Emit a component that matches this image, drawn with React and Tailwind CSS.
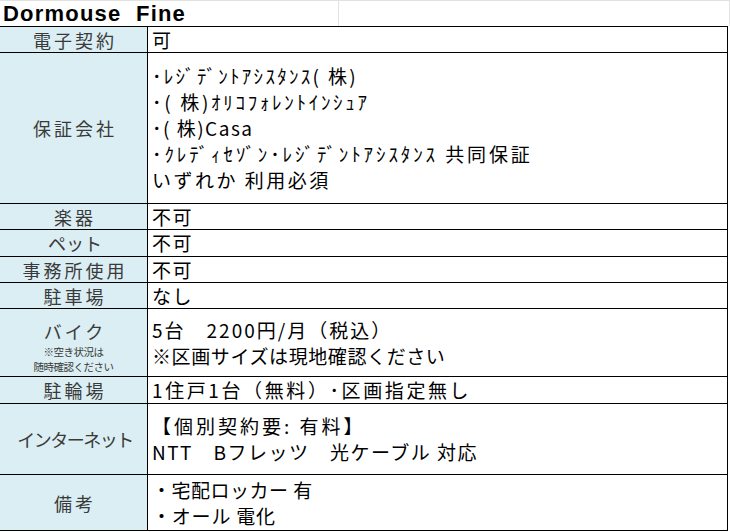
import React from 'react';

// 物件の設備・条件シート
const T = 'tracking-[1.5px]';
const W = 'tracking-[2.6px]';

const rows = [
  { label: '電子契約', h: 'h-[26px]', lines: [['可', T]] },
  {
    label: '保証会社',
    h: 'h-[151px]',
    lines: [
      ['･ﾚｼﾞﾃﾞﾝﾄｱｼｽﾀﾝｽ( 株)', 'tracking-[2.3px]'],
      ['･( 株)ｵﾘｺﾌｫﾚﾝﾄｲﾝｼｭｱ', 'tracking-[2.7px]'],
      ['･( 株)Casa', T],
      ['･ｸﾚﾃﾞｨｾｿﾞﾝ･ﾚｼﾞﾃﾞﾝﾄｱｼｽﾀﾝｽ 共同保証', 'tracking-[2.9px]'],
      ['いずれか 利用必須', 'tracking-[2.5px]'],
    ],
  },
  { label: '楽器', h: 'h-[26px]', lines: [['不可', T]] },
  { label: 'ペット', lt: 'tracking-[0px]', h: 'h-[27px]', lines: [['不可', T]] },
  { label: '事務所使用', h: 'h-[26px]', lines: [['不可', T]] },
  { label: '駐車場', h: 'h-[26px]', lines: [['なし', T]] },
  {
    label: 'バイク',
    note: ['※空き状況は', '随時確認ください'],
    h: 'h-[68px]',
    lines: [
      ['5台　2200円/月（税込）', 'tracking-[2px]'],
      ['※区画サイズは現地確認ください', 'tracking-[0.6px]'],
    ],
  },
  { label: '駐輪場', h: 'h-[27px]', lines: [['1住戸1台（無料）･区画指定無し', W]] },
  {
    label: 'インターネット',
    lt: 'tracking-[-1.5px]',
    h: 'h-[71px]',
    lines: [
      ['【個別契約要: 有料】', 'tracking-[3px]'],
      ['NTT　Bフレッツ　光ケーブル 対応', T],
    ],
  },
  {
    label: '備考',
    h: 'h-[56px]',
    lines: [
      ['・宅配ロッカー 有', 'tracking-[0.5px]'],
      ['・オール 電化', 'tracking-[0.8px]'],
    ],
  },
];

const jp = { fontFamily: '"Noto Sans CJK JP", "Noto Sans", sans-serif' };

export default function App() {
  return (
    <div className="w-[730px] h-[532px] bg-white overflow-hidden" style={jp}>
      {/* タイトル行 */}
      <div className="flex h-[26px] border-t border-[#e2e2e2]">
        <div className="w-[339px] border-r border-[#e2e2e2] pl-[3px] flex items-center">
          <span
            className="text-[22px] font-bold text-black leading-none tracking-[1.2px]"
            style={{ fontFamily: '"Liberation Sans", Arial, sans-serif' }}
          >
            Dormouse&nbsp;&nbsp;Fine
          </span>
        </div>
        <div className="w-[391px] border-r border-[#e2e2e2]" />
      </div>

      {/* 表 */}
      <div className="w-[728px] border-t border-r border-black">
        {rows.map((r) => (
          <div key={r.label} className={`flex border-b border-black box-border ${r.h}`}>
            <div
              className={`w-[148px] shrink-0 bg-[#daeef3] border-r border-black flex flex-col items-center justify-center text-[#3a3a3a] ${r.note ? 'pt-[6px]' : ''}`}
            >
              <span className={`text-[18px] leading-[26px] pl-[3px] whitespace-nowrap ${r.lt || 'tracking-[3px]'}`}>
                {r.label}
              </span>
              {r.note &&
                r.note.map((n) => (
                  <span key={n} className="text-[10.5px] leading-[15px] tracking-[-0.5px]">
                    {n}
                  </span>
                ))}
            </div>
            <div className="flex-1 flex flex-col justify-center pl-[4px] text-black">
              {r.lines.map(([l, t]) => (
                <span key={l} className={`text-[19px] leading-[26px] whitespace-pre ${t}`}>
                  {l}
                </span>
              ))}
            </div>
          </div>
        ))}
      </div>
    </div>
  );
}
